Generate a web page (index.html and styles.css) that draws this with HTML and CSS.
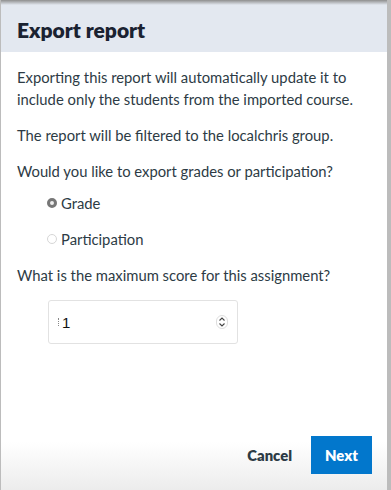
FILE: index.html
```html
<!DOCTYPE html>
<html lang="en">
<head>
    <meta charset="UTF-8">
    <meta name="viewport" content="width=device-width, initial-scale=1.0">
    <title>Export report</title>
    <link rel="stylesheet" href="styles.css">
</head>
<body>

    <div class="modal">
        <div class="modal-header">
            <h2>Export report</h2>
        </div>
        <div class="modal-body">
            <p>Exporting this report will automatically update it to include only the students from the imported course.</p>
            <p>The report will be filtered to the localchris group.</p>
            <p class="question">Would you like to export grades or participation?</p>

            <div class="radio-list">
                <label class="radio-row">
                    <span class="radio checked"></span>Grade
                </label>
                <label class="radio-row">
                    <span class="radio"></span>Participation
                </label>
            </div>

            <p>What is the maximum score for this assignment?</p>

            <div class="number-input">
                <span class="caret"></span>
                <span class="value">1</span>
                <svg class="spinner" width="12" height="14" viewBox="0 0 12 14">
                    <rect x="0.5" y="0.5" width="11" height="13" rx="5.5" fill="#fff" stroke="#ddd"/>
                    <path d="M3.5 5.5 L6 3 L8.5 5.5" fill="none" stroke="#444" stroke-width="1.1"/>
                    <path d="M3.5 8.5 L6 11 L8.5 8.5" fill="none" stroke="#444" stroke-width="1.1"/>
                </svg>
            </div>
        </div>
        <div class="modal-footer">
            <button class="btn-cancel">Cancel</button>
            <button class="btn-next">Next</button>
        </div>
    </div>

</body>
</html>
```

FILE: styles.css
```css
html, body {
    margin: 0;
    height: 100%;
}
body {
    font-family: Lato, "Open Sans", sans-serif;
    background: #bcbcbc;
    color: #2d3b45;
    overflow: hidden;
}
.modal {
    position: relative;
    height: 490px;
    width: 386px;
    margin-left: 1px;
    background: #fff;
    display: flex;
    flex-direction: column;
}
.modal::before {
    content: "";
    position: absolute;
    left: 0;
    right: 0;
    top: 0;
    height: 5px;
    background: linear-gradient(#8e8e8e, #e3e8f0);
}
.modal-header {
    background: #e3e8f0;
    height: 52px;
    padding: 0 16px;
    display: flex;
    align-items: center;
    box-sizing: border-box;
    padding-top: 6px;
}
.modal-header h2 {
    margin: 0;
    font-size: 21px;
    font-weight: 800;
    color: #1a2231;
}
.modal-body {
    height: 374px;
    box-sizing: border-box;
    padding: 14px 16px 0;
}
.modal-body p {
    margin: 0 0 14px;
    font-size: 14.8px;
    line-height: 22px;
}
.modal-body p.question {
    margin-bottom: 3px;
}
.radio-list {
    padding-left: 30px;
    margin-bottom: 7px;
}
.radio-row {
    display: flex;
    align-items: center;
    height: 36px;
    font-size: 14.8px;
}
.radio {
    width: 10px;
    height: 10px;
    border-radius: 50%;
    border: 1px solid #d6d6d6;
    box-sizing: border-box;
    margin-right: 4px;
}
.radio.checked {
    border: 3px solid #777;
    background: #eee;
}
.number-input {
    width: 190px;
    height: 44px;
    margin-left: 31px;
    border: 1px solid #e2e2e2;
    border-radius: 3px;
    box-sizing: border-box;
    display: flex;
    align-items: center;
    padding: 0 9px;
}
.caret {
    width: 1px;
    height: 8px;
    border-left: 1px dotted #888;
    margin-right: 2px;
}
.value {
    flex: 1;
    font-family: "Liberation Sans", sans-serif;
    font-size: 15px;
    color: #111;
}
.modal-footer {
    flex: 1;
    display: flex;
    justify-content: flex-end;
    align-items: flex-start;
    padding: 10px 15px 0;
    background: linear-gradient(#fff 0%, #fff 25%, #ececec 100%);
    gap: 19px;
}
.modal-footer button {
    font-family: Lato, sans-serif;
    font-size: 14.8px;
    font-weight: 800;
    border: none;
    cursor: pointer;
    height: 38px;
}
.btn-cancel {
    background: transparent;
    color: #2d3b45;
    padding: 0;
}
.btn-next {
    background: #0277cc;
    color: #fff;
    width: 61px;
}
```
